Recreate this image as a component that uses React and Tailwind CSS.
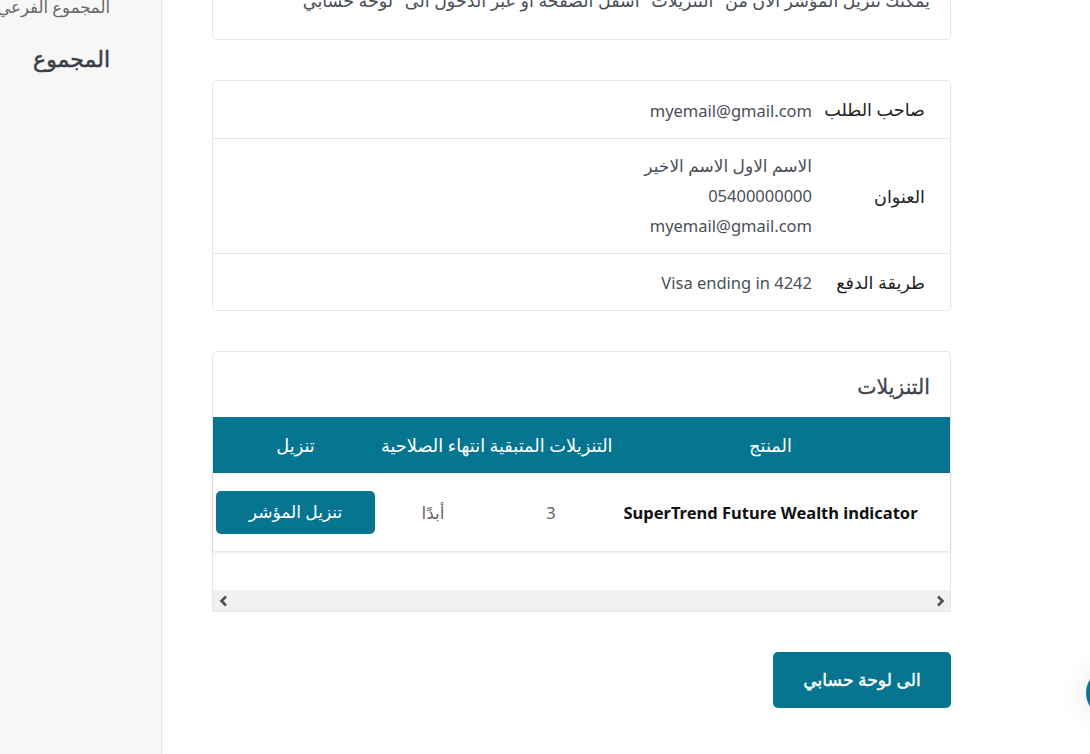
const FONT = '"Noto Sans", "DejaVu Sans", sans-serif';

function ChevronLeft() {
  return (
    <svg width="10" height="12" viewBox="0 0 10 12" fill="none" stroke="#505050" strokeWidth="2.6">
      <path d="M8 1.5 L3.5 6 L8 10.5" />
    </svg>
  );
}

function ChevronRight() {
  return (
    <svg width="10" height="12" viewBox="0 0 10 12" fill="none" stroke="#505050" strokeWidth="2.6">
      <path d="M2 1.5 L6.5 6 L2 10.5" />
    </svg>
  );
}

function InfoRow({ label, children, className, valueClass = "pt-[3px]" }) {
  return (
    <div className={`grid grid-cols-[138px_1fr] items-center ${className}`}>
      <div className="pr-[25px] text-[17.6px] text-[#222]">{label}</div>
      <div className={`text-[16.5px] text-[#4a4f57] ${valueClass}`}>{children}</div>
    </div>
  );
}

export default function App() {
  return (
    <div dir="ltr" className="relative flex h-[754px] w-[1090px] overflow-hidden bg-white text-[16px]" style={{ fontFamily: FONT }}>
      <aside dir="rtl" className="h-full w-[162px] shrink-0 overflow-hidden border-r border-[#e4e4e4] bg-[#f7f7f7] pr-[51px]">
        <div className="-mt-[6px] whitespace-nowrap text-[16.5px] leading-[26px] text-[#666]">المجموع الفرعي</div>
        <div className="mt-[23px] whitespace-nowrap text-[22px] leading-[30px] text-[#3a3f47] [-webkit-text-stroke:0.5px_#3a3f47]">المجموع</div>
      </aside>

      <main dir="rtl" className="ml-[50px] w-[739px] shrink-0">
        <section className="-mt-[30px] flex h-[70px] rounded-b-[5px] border border-[#e6e6e6] px-[20px] pt-[16px]">
          <p className="whitespace-nowrap text-[17.5px] leading-[26px] text-[#4a4f57]">يمكنك تنزيل المؤشر الان من "التنزيلات" اسفل الصفحة او عبر الدخول الى "لوحة حسابي"</p>
        </section>

        <section className="mt-[40px] rounded-[5px] border border-[#e6e6e6]">
          <InfoRow label="صاحب الطلب" className="h-[58px] border-b border-[#e6e6e6]">myemail@gmail.com</InfoRow>
          <InfoRow label="العنوان" className="h-[115px] border-b border-[#e6e6e6]" valueClass="">
            <div className="leading-[30px]">
              <div className="text-[17px]">الاسم الاول الاسم الاخير</div>
              <div>05400000000</div>
              <div>myemail@gmail.com</div>
            </div>
          </InfoRow>
          <InfoRow label="طريقة الدفع" className="h-[56px]">Visa ending in 4242</InfoRow>
        </section>

        <section className="mt-[40px] rounded-t-[5px] border border-[#e6e6e6]">
          <h2 className="h-[65px] pr-[20px] pt-[19px] text-[20.5px] font-normal leading-[30px] text-[#3f444c] [-webkit-text-stroke:0.3px_#3f444c]">التنزيلات</h2>
          <div className="grid h-[56px] grid-cols-[336px_126px_110px_165px] items-center bg-[#067590] text-[17.8px] text-white">
            <div className="flex justify-center whitespace-nowrap pl-[9px] pr-[32px]">المنتج</div>
            <div className="flex justify-center whitespace-nowrap">التنزيلات المتبقية</div>
            <div className="flex justify-center whitespace-nowrap">انتهاء الصلاحية</div>
            <div className="flex justify-center whitespace-nowrap">تنزيل</div>
          </div>
          <div className="grid h-[78px] grid-cols-[336px_126px_110px_165px] items-center shadow-[0_1px_3px_rgba(0,0,0,0.15)]">
            <div className="flex justify-center whitespace-nowrap pl-[9px] pr-[32px] pt-[2px] text-[16.5px] font-bold text-[#111]">SuperTrend Future Wealth indicator</div>
            <div className="flex justify-center pt-[2px] text-[16.5px] text-[#666]">3</div>
            <div className="flex justify-center pt-[2px] text-[17px] text-[#666]">أبدًا</div>
            <div className="pl-[3px] pr-[3px]">
              <a className="flex h-[43px] w-[159px] items-center justify-center rounded-[5px] bg-[#067590] text-[17px] text-white">تنزيل المؤشر</a>
            </div>
          </div>
          <div className="h-[39px]" />
          <div dir="ltr" className="flex h-[21px] items-center justify-between bg-[#f1f1f1] pl-[5px] pr-[4px]">
            <ChevronLeft />
            <ChevronRight />
          </div>
        </section>

        <div className="mt-[40px]">
          <a className="flex h-[56px] w-[178px] items-center justify-center rounded-[5px] bg-[#067590] text-[17.2px] text-white [-webkit-text-stroke:0.4px_#ffffff]">الى لوحة حسابي</a>
        </div>
      </main>

      <div className="absolute left-[1086px] top-[668px] h-[50px] w-[50px] rounded-full bg-[#067590] shadow-[0_0_30px_rgba(0,0,0,0.1)]" />
    </div>
  );
}
